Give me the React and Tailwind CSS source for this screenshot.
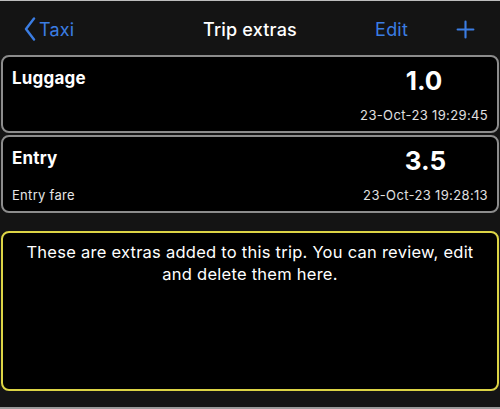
import { Plus } from 'lucide-react';

const extras = [
  { name: 'Luggage', note: '', amount: '1.0', time: '23-Oct-23 19:29:45' },
  { name: 'Entry', note: 'Entry fare', amount: '3.5', time: '23-Oct-23 19:28:13' },
];

export default function App() {
  return (
    <div
      className="w-[500px] h-[409px] bg-[#141414] border-t border-[#bdbdbd] flex flex-col text-white overflow-hidden"
      style={{ fontFamily: 'Inter, "Noto Sans", sans-serif' }}
    >
      {/* Nav bar */}
      <div className="h-[53px] relative flex items-center px-[24px] pt-[3px] shrink-0">
        <div className="flex items-center text-[#3b7de3] text-[18px] tracking-[0.2px]">
          <svg width="12" height="24" viewBox="0 0 12 24" className="mr-[3px]">
            <path d="M10 1.5 L2 12 L10 22.5" fill="none" stroke="currentColor" strokeWidth="2.4" strokeLinecap="round" strokeLinejoin="round" />
          </svg>
          <span>Taxi</span>
        </div>
        <div className="absolute left-0 right-0 text-center text-[18px] font-medium tracking-[0.2px] pointer-events-none">Trip extras</div>
        <div className="ml-auto flex items-center text-[#3b7de3]">
          <span className="text-[18px] mr-[44px] tracking-[0.2px]">Edit</span>
          <Plus className="w-[27px] h-[27px] mr-[-3px]" strokeWidth={1.9} />
        </div>
      </div>

      {/* Cards */}
      <div className="flex flex-col gap-[2px] px-[1px] mt-[1px]">
        {extras.map((x) => (
          <div key={x.name} className="h-[78px] bg-black border-2 border-[#8c8c8c] rounded-[8px] flex justify-between pl-[9px] pr-[9px] pt-[10px] pb-[6px]">
            <div className="flex flex-col justify-between">
              <div className="text-[17px] font-bold tracking-[0.2px] leading-[22px]">{x.name}</div>
              <div className="text-[13px] text-[#e6e6e6] tracking-[0.3px]">{x.note}</div>
            </div>
            <div className="flex flex-col items-center justify-between">
              <div className="text-[26px] font-bold leading-[30px] mt-[-1px]">{x.amount}</div>
              <div className="text-[13px] text-[#e0e0e0] tracking-[0.35px]">{x.time}</div>
            </div>
          </div>
        ))}
      </div>

      {/* Info box */}
      <div className="mx-[1px] mt-[18px] h-[160px] bg-black border-2 border-[#dcd445] rounded-[8px] px-[14px] pt-[8px]">
        <p className="text-center text-[16.5px] leading-[22px] tracking-[0.25px]">
          These are extras added to this trip. You can review, edit and delete them here.
        </p>
      </div>

      <div className="flex-1" />
      <div className="h-[2px] bg-[#9a9a9a] shrink-0" />
    </div>
  );
}
